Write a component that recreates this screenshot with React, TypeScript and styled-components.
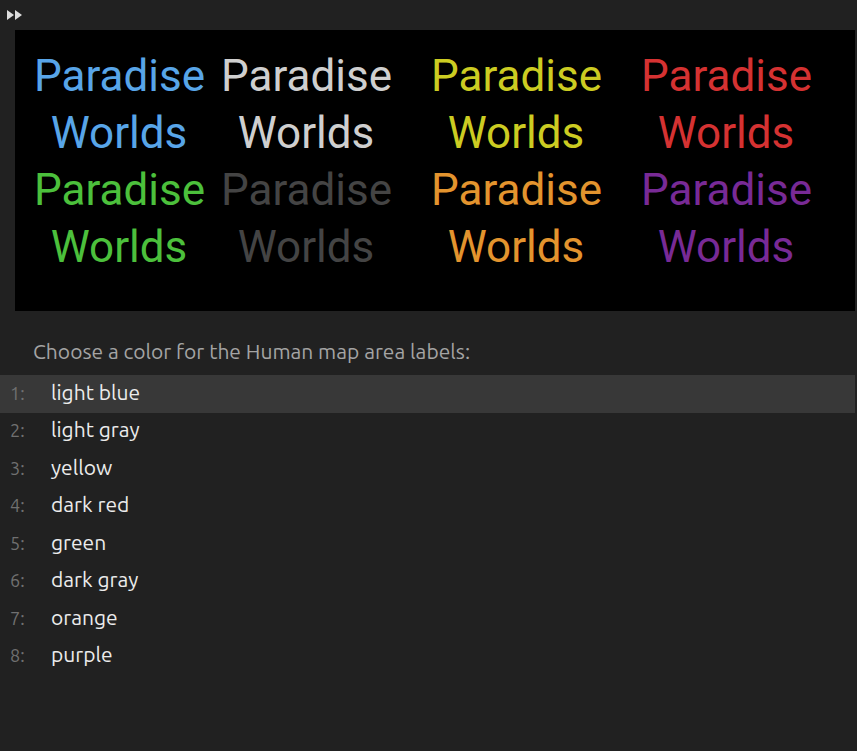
import React from 'react';
import styled, { createGlobalStyle } from 'styled-components';

const GlobalStyle = createGlobalStyle`
  html, body {
    margin: 0;
    padding: 0;
    background: #212121;
  }
  body {
    width: 857px;
    height: 751px;
    overflow: hidden;
  }
`;

const Screen = styled.div`
  width: 857px;
  height: 751px;
  background: #212121;
  display: flex;
  flex-direction: column;
`;

const TopBar = styled.div`
  height: 30px;
  display: flex;
  align-items: center;
  padding-left: 7px;
`;

const Preview = styled.div`
  margin-left: 15px;
  margin-right: 2px;
  height: 281px;
  box-sizing: border-box;
  background: #000;
  display: grid;
  grid-template-columns: 187px 210px 210px 210px;
  grid-template-rows: repeat(2, 114px);
  align-content: start;
  padding: 18px 0 0 19px;
  font-family: Roboto, "Liberation Sans", sans-serif;
  font-size: 44px;
  line-height: 57px;
`;

const Sample = styled.div<{ $color: string }>`
  width: 170px;
  text-align: center;
  color: ${(p) => p.$color};
  white-space: nowrap;
`;

const Prompt = styled.div`
  padding: 28px 0 0 33px;
  height: 36px;
  font-family: Ubuntu, Lato, "Noto Sans", sans-serif;
  font-size: 21px;
  color: #a4a4a4;
`;

const Options = styled.div`
  display: flex;
  flex-direction: column;
  font-family: Ubuntu, Lato, "Noto Sans", sans-serif;
`;

const Option = styled.div<{ $active?: boolean }>`
  height: 37.5px;
  width: 855px;
  display: flex;
  align-items: center;
  background: ${(p) => (p.$active ? '#383838' : 'transparent')};
`;

const Num = styled.span`
  width: 51px;
  padding-left: 10px;
  box-sizing: border-box;
  font-size: 18px;
  color: #707070;
  margin-top: -2px;
`;

const Label = styled.span`
  font-size: 21px;
  color: #ececec;
  margin-top: -4px;
`;

const samples = [
  '#58a5e8',
  '#cfcfcf',
  '#cccc22',
  '#d53232',
  '#4cc03c',
  '#444444',
  '#e3942e',
  '#782a96',
];

const options = [
  'light blue',
  'light gray',
  'yellow',
  'dark red',
  'green',
  'dark gray',
  'orange',
  'purple',
];

function SkipIcon() {
  return (
    <svg width="16" height="12" viewBox="0 0 16 12">
      <polygon points="0,1 7,6 0,11" fill="#dcdcdc" />
      <polygon points="8,1 15,6 8,11" fill="#dcdcdc" />
    </svg>
  );
}

export default function App() {
  return (
    <Screen>
      <GlobalStyle />
      <TopBar>
        <SkipIcon />
      </TopBar>
      <Preview>
        {samples.map((color) => (
          <Sample key={color} $color={color}>
            Paradise
            <br />
            Worlds
          </Sample>
        ))}
      </Preview>
      <Prompt>Choose a color for the Human map area labels:</Prompt>
      <Options>
        {options.map((name, i) => (
          <Option key={name} $active={i === 0}>
            <Num>{i + 1}:</Num>
            <Label>{name}</Label>
          </Option>
        ))}
      </Options>
    </Screen>
  );
}
